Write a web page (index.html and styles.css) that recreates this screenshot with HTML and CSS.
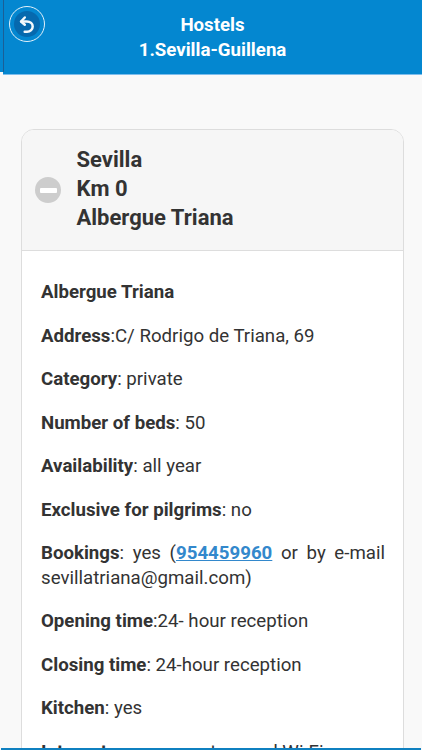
FILE: index.html
```html
<!DOCTYPE html>
<html lang="en">
<head>
<meta charset="utf-8">
<title>Hostels</title>
<link rel="stylesheet" href="styles.css">
</head>
<body>
<div class="screen">
  <header class="topbar">
    <button class="back" aria-label="Back">
      <svg viewBox="0 0 26 26" width="26" height="26"><path d="M10.800 6.500 7 10.500l3.800 3.200" fill="none" stroke="#f4f8fb" stroke-width="2.500" stroke-linecap="round" stroke-linejoin="round"/><path d="M7.500 10.500h5.300c3.600 0 5.900 2.300 5.900 5s-2.300 5.200-5.600 5.200h-2.400" fill="none" stroke="#f4f8fb" stroke-width="2.500" stroke-linecap="round"/></svg>
    </button>
    <h1 class="title">Hostels<br>1.Sevilla-Guillena</h1>
  </header>
  <main class="content">
    <section class="card">
      <div class="card-head">
        <span class="collapse"><span class="minus"></span></span>
        <h2 class="heading">Sevilla<br>Km 0<br>Albergue Triana</h2>
      </div>
      <div class="card-body">
        <p><b>Albergue Triana</b></p>
        <p><b>Address</b>:C/ Rodrigo de Triana, 69</p>
        <p><b>Category</b>: private</p>
        <p><b>Number of beds</b>: 50</p>
        <p><b>Availability</b>: all year</p>
        <p><b>Exclusive for pilgrims</b>: no</p>
        <p class="just"><b>Bookings</b>: yes (<a href="#">954459960</a> or by e-mail sevillatriana@gmail.com)</p>
        <p><b>Opening time</b>:24- hour reception</p>
        <p><b>Closing time</b>: 24-hour reception</p>
        <p><b>Kitchen</b>: yes</p>
        <p><b>Internet</b>: yes, computers and Wi-Fi</p>
      </div>
    </section>
  </main>
  <div class="bottom-line"></div>
</div>
</body>
</html>
```
FILE: styles.css
```css
* { box-sizing: border-box; }
html, body { margin: 0; height: 100%; }
body { font-family: Roboto, "Liberation Sans", sans-serif; color: #333; background: #f9f9f9; }
.screen { position: relative; width: 422px; height: 750px; overflow: hidden; background: #f9f9f9; }
.topbar { position: relative; height: 75px; margin-left: 3px; background: #0487d0; border-bottom: 1px solid #7dbdec; display: flex; justify-content: center; padding-top: 13px; }
.topbar::before { content: ""; position: absolute; left: -3px; top: 0; width: 3px; height: 72px; background: #0487d0; border-right: 1px solid #1b5f96; }
.back { position: absolute; left: 6px; top: 6px; width: 36px; height: 36px; padding: 0; border-radius: 50%; border: 1px solid #e3f1fa; background: #0487d0; display: flex; align-items: center; justify-content: center; }
.back svg { width: 26px; height: 26px; border-radius: 50%; background: #0669ae; }
.title { margin: 0; font-size: 18.670px; line-height: 24.500px; font-weight: 700; color: #fff; text-align: center; }
.content { padding: 54px 18px 0 21px; }
.card { border: 1px solid #ddd; border-radius: 13px 13px 0 0; overflow: hidden; background: #fff; }
.card-head { height: 121px; display: flex; align-items: center; background: #f6f6f6; border-bottom: 1px solid #ddd; padding-left: 13px; }
.collapse { width: 26px; height: 26px; border-radius: 50%; background: #cdcdcd; display: flex; align-items: center; justify-content: center; margin-right: 16px; flex: none; }
.minus { width: 17px; height: 5px; border-radius: 1px; background: #fff; }
.heading { margin: 0 0 3px -0.500px; font-size: 22px; line-height: 29px; font-weight: 700; color: #333; }
.card-body { padding: 29px 18px 0 19px; font-size: 18.670px; line-height: 24.500px; }
.card-body p { margin: 0 0 19px; }
.card-body b { font-weight: 700; }
.just { text-align: justify; }
.card-body a { color: #3388cc; font-weight: 700; }
.bottom-line { position: absolute; left: 1px; right: 1px; bottom: 0; height: 2px; background: #0f80c0; }
```
